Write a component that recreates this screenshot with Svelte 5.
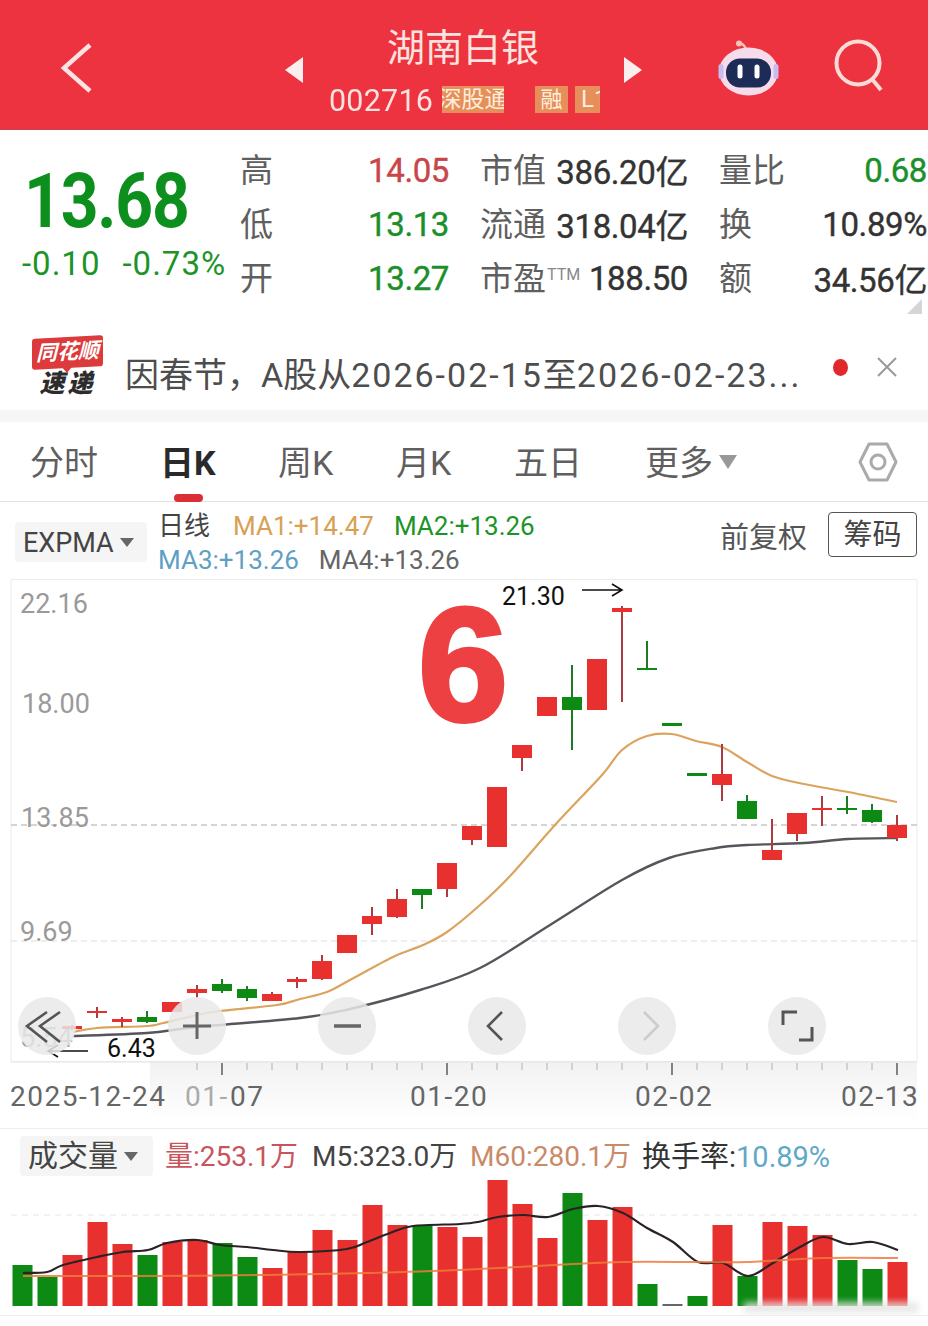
<script lang="ts">
  // [centre x, body top, body bottom, wick top, wick bottom, r|g]
  const candles: [number, number, number, number, number, string][] = [
    [72, 1026, 1029, 1025, 1030, 'r'],
    [97, 1011, 1013, 1007, 1018, 'r'],
    [122, 1019, 1022, 1017, 1027, 'r'],
    [147, 1017, 1022, 1011, 1023, 'g'],
    [172, 1002, 1012, 1002, 1012, 'r'],
    [197, 989, 993, 985, 998, 'r'],
    [222, 984, 991, 979, 993, 'g'],
    [247, 989, 998, 986, 1001, 'g'],
    [272, 994, 1001, 992, 1001, 'r'],
    [297, 979, 982, 977, 988, 'r'],
    [322, 961, 979, 955, 980, 'r'],
    [347, 935, 953, 935, 953, 'r'],
    [372, 916, 924, 907, 935, 'r'],
    [397, 899, 917, 889, 918, 'r'],
    [422, 889, 895, 889, 909, 'g'],
    [447, 863, 889, 863, 897, 'r'],
    [472, 826, 840, 826, 845, 'r'],
    [497, 787, 847, 787, 847, 'r'],
    [522, 745, 758, 745, 771, 'r'],
    [547, 697, 716, 697, 716, 'r'],
    [572, 697, 710, 665, 750, 'g'],
    [597, 659, 710, 659, 710, 'r'],
    [622, 608, 612, 606, 702, 'r'],
    [647, 668, 670, 641, 670, 'g'],
    [672, 723, 726, 723, 726, 'g'],
    [697, 773, 776, 773, 776, 'g'],
    [722, 774, 785, 744, 801, 'r'],
    [747, 801, 819, 795, 819, 'g'],
    [772, 850, 860, 819, 860, 'r'],
    [797, 813, 834, 813, 841, 'r'],
    [822, 808, 810, 796, 826, 'r'],
    [847, 808, 810, 796, 814, 'g'],
    [872, 810, 822, 804, 823, 'g'],
    [897, 825, 838, 815, 841, 'r']
  ];

  const ma1 =
    '73,1032 97,1028 147,1026 163,1023 197,1015 220,1011 277,1005 300,999 327,992 350,980 393,957 423,945 447,932 480,905 511,875 555,825 602,775 622,750 647,736 672,734 696,741 722,747 747,762 772,776 804,784 848,792 897,802';
  const ma2 =
    '73,1036 147,1033 197,1027 300,1018 350,1009 420,990 480,968 550,925 622,880 669,858 716,848 747,845 804,843 848,839 897,838';

  // volume bars, top edge in page px, baseline 1306
  const bars: [number, string][] = [
    [1265, 'g'], [1277, 'g'], [1255, 'r'], [1222, 'r'], [1244, 'r'], [1255, 'g'],
    [1242, 'r'], [1240, 'r'], [1243, 'g'], [1257, 'g'], [1268, 'r'], [1252, 'r'],
    [1230, 'r'], [1240, 'r'], [1205, 'r'], [1225, 'r'], [1225, 'g'], [1227, 'r'],
    [1237, 'r'], [1180, 'r'], [1204, 'r'], [1238, 'r'], [1193, 'g'], [1220, 'r'],
    [1207, 'r'], [1284, 'g'], [1304, 'k'], [1296, 'g'], [1225, 'r'], [1276, 'g'],
    [1222, 'r'], [1226, 'r'], [1235, 'r'], [1260, 'g'], [1269, 'g'], [1262, 'r']
  ];

  const volLine =
    '23,1273 47,1272 63,1265 97,1257 123,1252 148,1250 167,1243 197,1240 220,1245 247,1247 273,1250 300,1252 347,1249 367,1242 390,1233 413,1226 460,1224 478,1222 498,1217 523,1215 548,1217 573,1209 598,1206 623,1213 647,1228 673,1242 698,1262 723,1263 748,1276 773,1263 800,1247 823,1237 848,1244 873,1242 898,1250';
  const volAvg =
    '23,1276 133,1276 267,1275 367,1273 460,1270 573,1264 623,1262 698,1262 747,1262 823,1258 898,1258';

  // Catmull-Rom through the hand-read points, so the averages curve like the app's
  function smooth(points: string): string {
    const p = points.split(' ').map((s) => s.split(',').map(Number));
    let d = `M${p[0][0]} ${p[0][1]}`;
    for (let i = 0; i < p.length - 1; i++) {
      const a = p[Math.max(i - 1, 0)];
      const b = p[i];
      const c = p[i + 1];
      const e = p[Math.min(i + 2, p.length - 1)];
      const c1x = b[0] + (c[0] - a[0]) / 6;
      const c1y = b[1] + (c[1] - a[1]) / 6;
      const c2x = c[0] - (e[0] - b[0]) / 6;
      const c2y = c[1] - (e[1] - b[1]) / 6;
      d += ` C${c1x} ${c1y} ${c2x} ${c2y} ${c[0]} ${c[1]}`;
    }
    return d;
  }

  const minorTicks = Array.from({ length: 29 }, (_, i) => 197 + i * 25).filter(
    (x) => ![222, 447, 672, 897].includes(x)
  );
  const majorTicks = [222, 447, 672, 897];

  const quotes = [
    { l: '高', v: '14.05', c: 'up', l2: '市值', v2: '386.20亿', l3: '量比', v3: '0.68', c3: 'down' },
    { l: '低', v: '13.13', c: 'down', l2: '流通', v2: '318.04亿', l3: '换', v3: '10.89%', c3: '' },
    { l: '开', v: '13.27', c: 'down', l2: '市盈', ttm: true, v2: '188.50', l3: '额', v3: '34.56亿', c3: '' }
  ];
  const tabs = ['分时', '日K', '周K', '月K', '五日'];
</script>

<main class="page">
  <header class="top">
    <div class="top-left">
      <svg width="34" height="52" viewBox="0 0 34 52"><path d="M30 3 L4 26 L30 49" fill="none" stroke="#fbe3e3" stroke-width="4.5" /></svg>
    </div>
    <div class="top-mid">
      <span class="tri left"></span>
      <div class="stock">
        <div class="name">湖南白银</div>
        <div class="code-row">
          <span class="code">002716</span>
          <span class="badge wide"><span>深股通</span></span>
          <span class="badge rong">融</span>
          <span class="badge l1">L1</span>
        </div>
      </div>
      <span class="tri right"></span>
    </div>
    <div class="top-right">
      <svg width="62" height="62" viewBox="0 0 62 62">
        <path d="M22 10 Q25 9 28 15" fill="none" stroke="#f7c4bd" stroke-width="2.5" />
        <circle cx="21" cy="9.5" r="3" fill="#f7c4bd" />
        <ellipse cx="30.5" cy="37.5" rx="29.5" ry="24" fill="#f6dcea" />
        <rect x="0.5" y="30" width="5" height="15" rx="2.5" fill="#c6bcef" />
        <rect x="55.5" y="30" width="5" height="15" rx="2.5" fill="#c6bcef" />
        <rect x="8" y="24.5" width="45" height="29" rx="14" fill="#1d2c57" />
        <rect x="19.5" y="30.5" width="5" height="14" rx="2.5" fill="#fff" />
        <rect x="36.5" y="30.5" width="5" height="14" rx="2.5" fill="#fff" />
      </svg>
      <svg class="search" width="52" height="54" viewBox="0 0 52 54">
        <circle cx="24" cy="25" r="21.5" fill="none" stroke="#fadcd6" stroke-width="4" />
        <path d="M38 41 L47 52" stroke="#fadcd6" stroke-width="4" fill="none" />
      </svg>
    </div>
  </header>

  <section class="quote">
    <div class="price">
      <div class="big">13.68</div>
      <div class="change"><span>-0.10</span><span>-0.73%</span></div>
    </div>
    <div class="table">
      {#each quotes as q}
        <span class="lab">{q.l}</span>
        <span class="num {q.c}">{q.v}</span>
        <span class="lab mid">{q.l2}{#if q.ttm}<sup>TTM</sup>{/if}</span>
        <span class="num dark">{q.v2}</span>
        <span class="lab mid">{q.l3}</span>
        <span class="num dark {q.c3}">{q.v3}</span>
      {/each}
    </div>
    <span class="corner"></span>
  </section>

  <section class="notice">
    <div class="logo">
      <div class="logo-top">同花顺</div>
      <div class="logo-bottom">速递</div>
    </div>
    <div class="notice-text">因春节，A股从<span>2026-02-15</span>至<span>2026-02-23...</span></div>
    <span class="dot"></span>
    <svg width="22" height="22" viewBox="0 0 22 22"><path d="M2 2 L20 20 M20 2 L2 20" stroke="#999" stroke-width="2" /></svg>
  </section>

  <div class="band"></div>

  <nav class="tabs">
    {#each tabs as t, i}
      <span class="tab" class:active={i === 1}>{t}</span>
    {/each}
    <span class="tab more">更多<i class="caret"></i></span>
    <svg class="hex" width="40" height="42" viewBox="0 0 40 42">
      <path d="M11 3 H29 L38 21 L29 39 H11 L2 21 Z" fill="none" stroke="#aaa" stroke-width="3" stroke-linejoin="round" />
      <circle cx="20" cy="21" r="7" fill="none" stroke="#aaa" stroke-width="3" />
    </svg>
  </nav>

  <section class="legend">
    <div class="pick"><span>EXPMA</span><i class="caret small"></i></div>
    <div class="ma">
      <div><span class="k">日线</span><span class="m1">MA1:+14.47</span><span class="m2">MA2:+13.26</span></div>
      <div><span class="m3">MA3:+13.26</span><span class="m4">MA4:+13.26</span></div>
    </div>
    <span class="fq">前复权</span>
    <span class="chip">筹码</span>
  </section>

  <svg class="chart" width="928" height="546" viewBox="0 579 928 546">
    <defs>
      <linearGradient id="shade" x1="0" y1="0" x2="0" y2="1">
        <stop offset="0" stop-color="#ececec" />
        <stop offset="1" stop-color="#ffffff" />
      </linearGradient>
    </defs>
    <rect x="11" y="579.5" width="906" height="482" fill="#fff" stroke="#ececec" />
    <rect x="150" y="1062" width="767" height="60" fill="url(#shade)" opacity="0.7" />
    <line x1="11" x2="917" y1="825" y2="825" stroke="#aaa" stroke-dasharray="6 4" />
    <line x1="11" x2="917" y1="941" y2="941" stroke="#ddd" stroke-dasharray="6 4" />

    <text class="axis" x="20" y="613">22.16</text>
    <text class="axis" x="22" y="713">18.00</text>
    <text class="axis" x="21" y="827">13.85</text>
    <text class="axis" x="20" y="941">9.69</text>
    <text class="axis" x="20" y="1047">5.54</text>

    <text class="six" x="418" y="720">6</text>

    <path d={smooth(ma1)} fill="none" stroke="#dba45e" stroke-width="2.2" />
    <path d={smooth(ma2)} fill="none" stroke="#55555c" stroke-width="2.4" />

    {#each candles as [x, bt, bb, wt, wb, c]}
      <rect x={x - 1} y={wt} width="2" height={wb - wt} fill={c === 'r' ? '#ab3b40' : '#1f7a28'} />
      <rect x={x - 10} y={bt} width="20" height={bb - bt} fill={c === 'r' ? '#e8302f' : '#0c8a14'} />
    {/each}

    <text class="note" x="502" y="605">21.30</text>
    <path d="M582 590 H622 M612 584 L622 590 L612 596" fill="none" stroke="#111" stroke-width="1.6" />
    <text class="note" x="107" y="1057">6.43</text>
    <path d="M88 1051 H48 M58 1045 L48 1051 L58 1057" fill="none" stroke="#111" stroke-width="1.6" />

    <!-- zoom and pan buttons, translucent over the candles -->
    {#each [47, 197, 347, 497, 647, 797] as cx}
      <circle {cx} cy="1026" r="29" fill="#e9e9e9" opacity="0.85" />
    {/each}
    <path d="M59 1012 L39 1026 L59 1042 M46 1012 L26 1026 L46 1042" fill="none" stroke="#555" stroke-width="2.6" transform="translate(1 0)" />
    <path d="M183 1026 H211 M197 1012 V1039" stroke="#666" stroke-width="3" fill="none" />
    <path d="M334 1026 H361" stroke="#666" stroke-width="3.5" fill="none" />
    <path d="M502 1012 L488 1026 L502 1040" fill="none" stroke="#555" stroke-width="2.6" />
    <path d="M644 1012 L658 1026 L644 1040" fill="none" stroke="#ccc" stroke-width="2.6" />
    <path d="M797 1012 H783 V1025 M812 1027 V1040 H799" fill="none" stroke="#555" stroke-width="3" />

    <line x1="11" x2="917" y1="1062" y2="1062" stroke="#e6e6e6" />
    {#each minorTicks as x}
      <line x1={x} x2={x} y1="1063" y2="1070" stroke="#bbb" stroke-width="1.2" />
    {/each}
    {#each majorTicks as x}
      <line x1={x} x2={x} y1="1063" y2="1075" stroke="#666" stroke-width="1.6" />
    {/each}

    <text class="date" x="10" y="1106">2025-12-24</text>
    <text class="date faint" x="185" y="1106">01-</text>
    <text class="date" x="230" y="1106">07</text>
    <text class="date" x="410" y="1106">01-20</text>
    <text class="date" x="635" y="1106">02-02</text>
    <text class="date" x="841" y="1106">02-13</text>
  </svg>

  <section class="volume">
    <div class="vol-head">
      <div class="pick vol"><span>成交量</span><i class="caret small"></i></div>
      <span class="v1">量:253.1万</span>
      <span class="v2">M5:323.0万</span>
      <span class="v3">M60:280.1万</span>
      <span class="v4">换手率:<b>10.89%</b></span>
    </div>
    <svg class="vol-chart" width="928" height="137" viewBox="0 1178 928 137">
      <line x1="11" x2="917" y1="1215" y2="1215" stroke="#e6e6e6" stroke-dasharray="6 5" />
      {#each bars as [top, c], i}
        <rect
          x={12.5 + i * 25}
          y={top}
          width="20"
          height={1306 - top}
          fill={c === 'r' ? '#e8302f' : c === 'g' ? '#0c8a14' : '#666'}
        />
      {/each}
      <path d={smooth(volLine)} fill="none" stroke="#2a2226" stroke-width="2.2" />
      <path d={smooth(volAvg)} fill="none" stroke="#ee7a3c" stroke-width="2" opacity="0.85" />
      <rect class="mark" x="744" y="1302" width="174" height="11" />
    </svg>
  </section>
</main>

<style>
  :global(body) {
    margin: 0;
    background: #fff;
  }

  .page {
    width: 928px;
    height: 1326px;
    overflow: hidden;
    font-family: Roboto, 'Noto Sans CJK SC', sans-serif;
    color: #444;
  }

  .top {
    height: 130px;
    background: #ee3340;
    display: grid;
    grid-template-columns: 285px 357px 1fr;
    align-items: center;
    box-sizing: border-box;
    border-bottom: 1px solid #c9444b;
  }

  .top-left {
    padding: 6px 0 0 60px;
    height: 52px;
  }

  .top-mid {
    display: flex;
    align-items: center;
    justify-content: space-between;
  }

  .tri {
    width: 0;
    height: 0;
    border-top: 13px solid transparent;
    border-bottom: 13px solid transparent;
    margin-top: 10px;
  }

  .tri.left {
    border-right: 18px solid #fbeeee;
  }

  .tri.right {
    border-left: 18px solid #fbeeee;
  }

  .stock {
    flex: 1;
    padding: 0 0 0 26px;
    margin-top: 10px;
  }

  .name {
    font-size: 38px;
    line-height: 44px;
    color: #fbe3df;
    padding-left: 58px;
    margin-bottom: 16px;
  }

  .code-row {
    display: flex;
    align-items: center;
    height: 28px;
  }

  .code {
    font-size: 32px;
    letter-spacing: 0.3px;
    color: #fbe3df;
    width: 113px;
    transform: scaleX(0.95);
    transform-origin: left;
  }

  .badge {
    height: 27px;
    background: #e78f5a;
    color: #fdeedd;
    font-size: 22px;
    line-height: 27px;
    overflow: hidden;
    display: flex;
    justify-content: center;
  }

  .badge.wide {
    width: 62px;
    font-size: 23px;
  }

  .badge.wide span {
    flex: none;
  }

  .badge.rong {
    width: 33px;
    margin-left: 31px;
  }

  .badge.l1 {
    width: 25px;
    margin-left: 7px;
    justify-content: flex-start;
    padding-left: 6px;
    font-size: 24px;
    box-sizing: border-box;
  }

  .top-right {
    display: flex;
    align-items: center;
    padding: 0 0 0 76px;
    gap: 54px;
  }

  .quote {
    position: relative;
    height: 192px;
    display: flex;
  }

  .price {
    width: 240px;
    flex: none;
    color: #0c8f1c;
  }

  .big {
    font-size: 66px;
    font-weight: 700;
    line-height: 70px;
    margin: 36px 0 0 24px;
    letter-spacing: -1.2px;
    transform: scaleY(1.16);
    transform-origin: center;
  }

  .change {
    display: flex;
    gap: 22px;
    margin: 10px 0 0 22px;
    font-size: 33px;
    line-height: 36px;
    letter-spacing: 1px;
    color: #1c9428;
  }

  .table {
    display: grid;
    grid-template-columns: 51px 158px 100px 139px 100px 139px;
    grid-auto-rows: 54px;
    margin-top: 13px;
    align-items: center;
    height: 162px;
  }

  .lab {
    font-size: 33px;
    color: #5f5f5f;
    white-space: nowrap;
    margin-top: -4px;
  }

  .lab.mid {
    padding-left: 31px;
  }

  sup {
    font-size: 16px;
    color: #888;
    vertical-align: 10px;
    line-height: 0;
    margin-left: 1px;
  }

  .num {
    font-size: 33px;
    text-align: right;
    white-space: nowrap;
    letter-spacing: -0.4px;
    -webkit-text-stroke: 0.4px currentColor;
  }

  .up {
    color: #c8454a;
  }

  .down {
    color: #1a8f2a;
  }

  .num.dark:not(.down) {
    color: #333;
  }

  .corner {
    position: absolute;
    right: 6px;
    bottom: 8px;
    width: 0;
    height: 0;
    border-left: 15px solid transparent;
    border-bottom: 15px solid #d5d5d5;
  }

  .notice {
    height: 88px;
    display: flex;
    align-items: center;
    box-sizing: border-box;
    padding: 4px 0 0 32px;
  }

  .logo {
    width: 71px;
    flex: none;
    text-align: center;
  }

  .logo-top {
    position: relative;
    background: #dd3a3c;
    color: #fff;
    font-size: 21px;
    line-height: 31px;
    font-weight: 700;
    font-style: italic;
    border-radius: 3px;
    transform: skewY(-3deg);
  }

  .logo-top::after {
    content: '';
    position: absolute;
    left: 30px;
    top: 30px;
    width: 0;
    height: 0;
    border-left: 5px solid transparent;
    border-right: 5px solid transparent;
    border-top: 6px solid #dd3a3c;
  }

  .logo-bottom {
    color: #2c2c2c;
    font-size: 25px;
    line-height: 31px;
    font-weight: 900;
    font-style: italic;
    letter-spacing: 3px;
  }

  .notice-text {
    margin: 8px 0 0 22px;
    width: 708px;
    flex: none;
    font-size: 34px;
    color: #4d4d4d;
    white-space: nowrap;
  }

  .notice-text span {
    letter-spacing: 2px;
  }

  .dot {
    width: 15px;
    height: 17px;
    background: #e0282d;
    border-radius: 50%;
    margin: -2px 28px 0 0;
    flex: none;
  }

  .notice svg {
    margin-top: -2px;
    flex: none;
  }

  .band {
    height: 12px;
    background: #f6f6f6;
  }

  .tabs {
    height: 80px;
    position: relative;
    display: flex;
    align-items: center;
    padding: 0 0 0 30px;
    border-bottom: 1px solid #e2e2e2;
    box-sizing: border-box;
  }

  .tab {
    font-size: 34px;
    color: #5f5f5f;
    width: 118px;
    flex: none;
    margin-top: -3px;
    white-space: nowrap;
  }

  .tab:first-child {
    width: 130px;
  }

  .tab.active {
    font-weight: 700;
    color: #2a2a2a;
    position: relative;
  }

  .tab.active::after {
    content: '';
    position: absolute;
    left: 14px;
    bottom: -17px;
    width: 29px;
    height: 8px;
    border-radius: 4px;
    background: #db2f36;
  }

  .tab.more {
    width: auto;
    margin-left: 13px;
  }

  .caret {
    display: inline-block;
    width: 0;
    height: 0;
    border-left: 9px solid transparent;
    border-right: 9px solid transparent;
    border-top: 14px solid #999;
    margin-left: 6px;
    vertical-align: 6px;
  }

  .caret.small {
    border-left-width: 7px;
    border-right-width: 7px;
    border-top-width: 9px;
    border-top-color: #666;
    vertical-align: 5px;
  }

  .hex {
    position: absolute;
    left: 858px;
    top: 19px;
  }

  .legend {
    height: 77px;
    display: flex;
    align-items: flex-start;
    box-sizing: border-box;
    padding: 7px 11px 0 15px;
  }

  .pick {
    width: 132px;
    height: 40px;
    margin-top: 13px;
    background: #f5f5f5;
    border-radius: 4px;
    box-sizing: border-box;
    padding-left: 8px;
    font-size: 27px;
    line-height: 42px;
    color: #444;
    flex: none;
    white-space: nowrap;
  }

  .ma {
    width: 573px;
    flex: none;
    padding-left: 11px;
    box-sizing: border-box;
    font-size: 26px;
    line-height: 34px;
    white-space: nowrap;
  }

  .ma span {
    margin-right: 20px;
  }

  .ma .k {
    color: #444;
    margin-right: 23px;
  }

  .m1 {
    color: #d9a055;
  }

  .m2 {
    color: #1c9428;
  }

  .m3 {
    color: #5f9fc4;
  }

  .m4 {
    color: #666;
  }

  .fq {
    font-size: 29px;
    margin: 8px 0 0 0;
    line-height: 42px;
    color: #555;
    width: 108px;
    white-space: nowrap;
  }

  .chip {
    width: 89px;
    height: 45px;
    flex: none;
    margin-top: 3px;
    box-sizing: border-box;
    border: 1px solid #555;
    border-radius: 4px;
    text-align: center;
    font-size: 29px;
    line-height: 44px;
    color: #444;
  }

  .chart,
  .vol-chart {
    display: block;
  }

  .axis {
    font-size: 27px;
    fill: #9a9a9a;
  }

  .six {
    font-family: 'Liberation Sans', sans-serif;
    font-size: 162px;
    font-weight: 700;
    fill: #ec4042;
    stroke: #ec4042;
    stroke-width: 4px;
  }

  .note {
    font-size: 25px;
    fill: #111;
  }

  .date {
    font-size: 28px;
    letter-spacing: 1.5px;
    fill: #666;
  }

  .date.faint {
    fill: #aaa;
  }

  .volume {
    margin-top: 3px;
    height: 188px;
    box-sizing: border-box;
    border-top: 1px solid #eee;
    border-bottom: 1px solid #eee;
  }

  .vol-head {
    height: 49px;
    box-sizing: border-box;
    display: flex;
    align-items: flex-start;
    padding: 7px 0 0 20px;
    font-size: 28px;
    line-height: 42px;
    white-space: nowrap;
  }

  .pick.vol {
    width: 133px;
    margin: 0 12px 0 0;
    font-size: 30px;
    line-height: 40px;
  }

  .v1 {
    color: #c8555c;
    width: 147px;
    flex: none;
  }

  .v2 {
    color: #444;
    width: 158px;
    flex: none;
  }

  .v3 {
    color: #c98a68;
    width: 172px;
    flex: none;
  }

  .v4 {
    color: #333;
    font-size: 29px;
  }

  .v4 b {
    font-weight: 400;
    color: #5fa8c8;
  }

  /* the photo's watermark smear along the last bars */
  .mark {
    fill: #e4e4e4;
    opacity: 0.8;
    filter: blur(3px);
  }
</style>
